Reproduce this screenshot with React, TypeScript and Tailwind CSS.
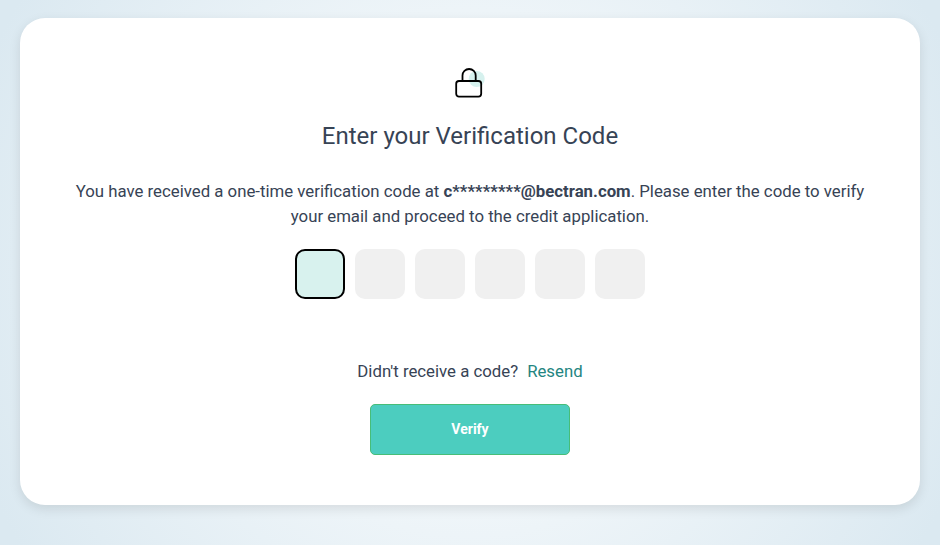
import { useRef, useState } from 'react';

const CODE_LENGTH = 6;

function LockIcon() {
  return (
    <svg width="32" height="32" viewBox="0 0 32 32" fill="none">
      <circle cx="22.7" cy="12" r="8" fill="#d6f1ee" />
      <path d="M8.5 14V8.6a6.6 6.6 0 0 1 13.2 0V14" stroke="#000" strokeWidth="1.8" />
      <rect x="2.2" y="14" width="25" height="15.6" rx="2.8" stroke="#000" strokeWidth="1.8" />
    </svg>
  );
}

export default function App() {
  const [code, setCode] = useState<string[]>(Array(CODE_LENGTH).fill(''));
  const [active, setActive] = useState(0);
  const inputs = useRef<(HTMLInputElement | null)[]>([]);

  const handleChange = (i: number, value: string) => {
    const digit = value.replace(/\D/g, '').slice(-1);
    setCode(code.map((c, n) => (n === i ? digit : c)));
    if (digit && i < CODE_LENGTH - 1) inputs.current[i + 1]?.focus();
  };

  return (
    <div className="h-screen overflow-hidden bg-[radial-gradient(circle,#ffffff_0%,#dbe9f1_97%)] px-5 pt-[18px] font-[Roboto,sans-serif] text-[#374355]">
      <div className="flex h-[487px] flex-col items-center rounded-[25px] bg-white pt-[49px] shadow-[0_4px_12px_rgba(0,0,0,0.1)]">
        <LockIcon />
        <h1 className="mt-[19px] text-2xl leading-9">Enter your Verification Code</h1>
        <p className="mt-[25px] w-[800px] text-center text-[16.8px] leading-[25px]">
          You have received a one-time verification code at <b>c*********@bectran.com</b>. Please enter the code to verify your email and proceed to the credit application.
        </p>
        <div className="mt-5 flex gap-2.5">
          {code.map((digit, i) => (
            <input
              key={i}
              ref={el => { inputs.current[i] = el; }}
              value={digit}
              inputMode="numeric"
              onFocus={() => setActive(i)}
              onChange={e => handleChange(i, e.target.value)}
              className={`size-[50px] rounded-[10px] text-center text-xl outline-none ${active === i ? 'border-2 border-black bg-[#d8f2ee]' : 'bg-[#f0f0f0]'}`}
            />
          ))}
        </div>
        <div className="mt-[60px] flex gap-[9px] text-[16.8px] leading-[25px]">
          <span>Didn't receive a code?</span>
          <button className="cursor-pointer text-[#248581]">Resend</button>
        </div>
        <button className="mt-5 h-[51px] w-[200px] cursor-pointer rounded-[5px] border border-[#47bd78] bg-[#4ccdbf] pb-0.5 text-sm font-bold text-white">
          Verify
        </button>
      </div>
    </div>
  );
}
